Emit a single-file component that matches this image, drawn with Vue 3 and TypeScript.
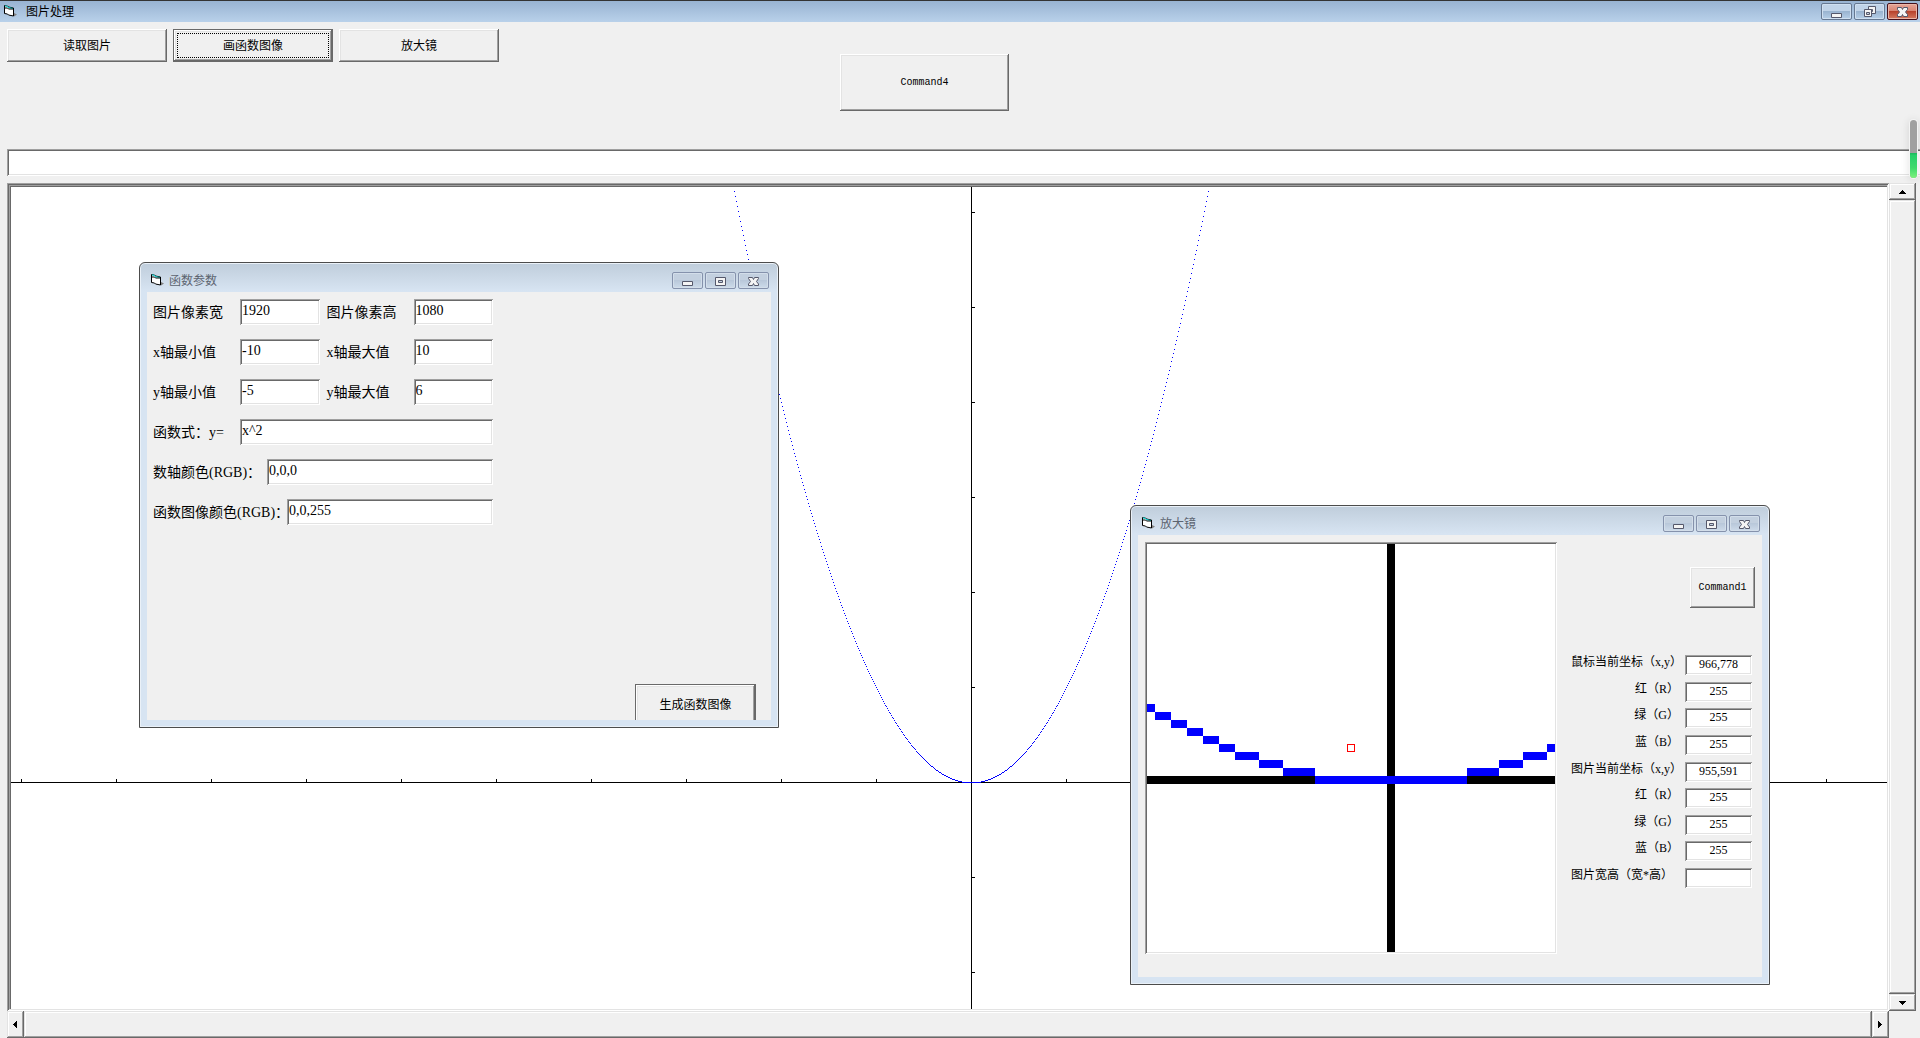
<script setup lang="ts">
import { ref } from 'vue'

type Glyph = 'min' | 'restore' | 'max' | 'close'

const UNIT = 95
const ORIGIN_X = 960
const ORIGIN_Y = 595
const REACH = 240
const CELL = 8
const GRID = 51

const level = (dx: number): number => Math.floor((dx * dx) / UNIT)

let curve = ''
for (let dx = -REACH; dx <= REACH; dx++) {
  curve += `M${ORIGIN_X + dx} ${ORIGIN_Y - level(dx)}h1v1h-1z`
}

let ticks = ''
for (let k = -10; k <= 10; k++) {
  ticks += `M${ORIGIN_X + k * UNIT} ${ORIGIN_Y - 3}h1v3h-1z`
  if (k >= -5 && k <= 6) ticks += `M${ORIGIN_X + 1} ${ORIGIN_Y - k * UNIT}h3v1h-3z`
}

const lensColumn = 30
const lensRow = 29
let lensCurve = ''
for (let c = 0; c < GRID; c++) {
  lensCurve += `M${c * CELL} ${(lensRow - level(c - lensColumn)) * CELL}h${CELL}v${CELL}h-${CELL}z`
}

const form = ref({
  width: '1920',
  height: '1080',
  xMin: '-10',
  xMax: '10',
  yMin: '-5',
  yMax: '6',
  expr: 'x^2',
  axis: '0,0,0',
  line: '0,0,255',
})

const path = ref('')

const readings = ref([
  { id: 'mouse', label: '鼠标当前坐标（x,y）', value: '966,778', short: false },
  { id: 'mr', label: '红（R）', value: '255', short: true },
  { id: 'mg', label: '绿（G）', value: '255', short: true },
  { id: 'mb', label: '蓝（B）', value: '255', short: true },
  { id: 'pic', label: '图片当前坐标（x,y）', value: '955,591', short: false },
  { id: 'pr', label: '红（R）', value: '255', short: true },
  { id: 'pg', label: '绿（G）', value: '255', short: true },
  { id: 'pb', label: '蓝（B）', value: '255', short: true },
  { id: 'size', label: '图片宽高（宽*高）', value: '', short: false },
])

const mainButtons: Glyph[] = ['min', 'restore', 'close']
const childButtons: Glyph[] = ['min', 'max', 'close']
const names: Record<Glyph, string> = { min: '最小化', restore: '还原', max: '最大化', close: '关闭' }
</script>

<template>
  <main class="app">
    <header class="titlebar">
      <svg class="form-icon" viewBox="0 0 14 12" width="14" height="12" aria-hidden="true">
        <path d="M10 8l3 1.500l-3 2z" fill="#808080" />
        <path d="M.5.5l3 .5l1 1l5 1v8l-5-1l-1-1l-3-.5z" fill="#fff" stroke="#000" />
        <path d="M1 1h2l1 1.500l5 1" fill="none" stroke="#00d8d8" />
        <path d="M1 3h2.500l1 1h5" fill="none" stroke="#000" />
      </svg>
      <h1>图片处理</h1>
      <div class="caption">
        <button v-for="g in mainButtons" :key="g" type="button" :class="['cap', 'bright', g]" :aria-label="names[g]">
          <svg viewBox="0 0 13 13" width="13" height="13" aria-hidden="true">
            <path v-if="g === 'min'" d="M1.500 8.500h10v4h-10z" />
            <g v-else-if="g === 'restore'">
              <path d="M5.500 1.500h7v7h-7z" /><path d="M7.500 4.500h2v2h-2z" />
              <path d="M1.500 4.500h7v7h-7z" /><path class="hole" d="M3.500 7.500h3v2h-3z" />
            </g>
            <path v-else d="M1.500 2.500h4l1 2l1-2h4v2l-2 2.500l2 2.500v2h-4l-1-2l-1 2h-4v-2l2-2.500l-2-2.500z" />
          </svg>
        </button>
      </div>
    </header>

    <nav class="toolbar">
      <button type="button" class="cmd wide">读取图片</button>
      <button type="button" class="cmd wide focused">画函数图像</button>
      <button type="button" class="cmd wide">放大镜</button>
      <button type="button" class="cmd command4 latin">Command4</button>
    </nav>

    <input v-model="path" class="field path" type="text" aria-label="图片路径" />

    <section class="viewer">
      <div class="canvas">
        <div class="canvas-view">
          <svg class="plot" viewBox="0 0 1920 1080" width="1920" height="1080" shape-rendering="crispEdges" role="img" aria-label="函数图像">
            <path :d="`M0 ${ORIGIN_Y}h1920v1h-1920zM${ORIGIN_X} 0h1v1080h-1z`" />
            <path :d="ticks" />
            <path :d="curve" fill="#00f" />
          </svg>
        </div>
      </div>
      <div class="vbar">
        <button type="button" class="bar-btn" aria-label="向上"><svg viewBox="0 0 7 4" width="7" height="4"><path d="M3 0h1v1h1v1h1v1h1v1h-7v-1h1v-1h1v-1h1z" /></svg></button>
        <div class="thumb"></div>
        <button type="button" class="bar-btn" aria-label="向下"><svg viewBox="0 0 7 4" width="7" height="4"><path d="M0 0h7v1h-1v1h-1v1h-1v1h-1v-1h-1v-1h-1v-1h-1z" /></svg></button>
      </div>
      <div class="hbar">
        <button type="button" class="bar-btn" aria-label="向左"><svg viewBox="0 0 4 7" width="4" height="7"><path d="M4 0v7h-1v-1h-1v-1h-1v-1h-1v-1h1v-1h1v-1h1v-1z" /></svg></button>
        <div class="thumb"></div>
        <button type="button" class="bar-btn" aria-label="向右"><svg viewBox="0 0 4 7" width="4" height="7"><path d="M0 0v7h1v-1h1v-1h1v-1h1v-1h-1v-1h-1v-1h-1v-1z" /></svg></button>
      </div>
    </section>

    <section
      v-for="w in ['函数参数', '放大镜']"
      :key="w"
      :class="['window', w === '放大镜' ? 'lens-window' : 'param-window']"
      :aria-label="w"
    >
      <header class="window-title">
        <svg class="form-icon" viewBox="0 0 14 12" width="14" height="12" aria-hidden="true">
          <path d="M10 8l3 1.500l-3 2z" fill="#808080" />
          <path d="M.5.5l3 .5l1 1l5 1v8l-5-1l-1-1l-3-.5z" fill="#fff" stroke="#000" />
          <path d="M1 1h2l1 1.500l5 1" fill="none" stroke="#00d8d8" />
          <path d="M1 3h2.500l1 1h5" fill="none" stroke="#000" />
        </svg>
        <h2>{{ w }}</h2>
        <div class="caption">
          <button v-for="g in childButtons" :key="g" type="button" class="cap" :aria-label="names[g]">
            <svg viewBox="0 0 13 13" width="13" height="13" aria-hidden="true">
              <path v-if="g === 'min'" d="M1.500 7.500h10v4h-10z" />
              <g v-else-if="g === 'max'">
                <path d="M1.500 3.500h10v8h-10z" /><path class="hole" d="M4.500 6.500h4v2h-4z" />
              </g>
              <path v-else d="M1.500 3.500h4l1 2l1-2h4v1l-2 3l2 2.500v1.500h-4l-1-2l-1 2h-4v-1.500l2-2.500l-2-3z" />
            </svg>
          </button>
        </div>
      </header>

      <form v-if="w === '函数参数'" class="params" @submit.prevent>
        <div class="row">
          <label for="pw">图片像素宽</label><input id="pw" v-model="form.width" class="field" type="text" />
          <label for="ph" class="second">图片像素高</label><input id="ph" v-model="form.height" class="field" type="text" />
        </div>
        <div class="row">
          <label for="x0">x轴最小值</label><input id="x0" v-model="form.xMin" class="field" type="text" />
          <label for="x1" class="second">x轴最大值</label><input id="x1" v-model="form.xMax" class="field" type="text" />
        </div>
        <div class="row">
          <label for="y0">y轴最小值</label><input id="y0" v-model="form.yMin" class="field" type="text" />
          <label for="y1" class="second">y轴最大值</label><input id="y1" v-model="form.yMax" class="field" type="text" />
        </div>
        <div class="row">
          <label for="fx">函数式：y=</label><input id="fx" v-model="form.expr" class="field grow" type="text" />
        </div>
        <div class="row">
          <label for="ac" class="mid">数轴颜色(RGB)：</label><input id="ac" v-model="form.axis" class="field grow" type="text" />
        </div>
        <div class="row">
          <label for="fc" class="long">函数图像颜色(RGB)：</label><input id="fc" v-model="form.line" class="field grow" type="text" />
        </div>
        <button type="submit" class="cmd generate">生成函数图像</button>
      </form>

      <div v-else class="lens">
        <div class="lens-view">
          <svg viewBox="0 0 408 408" width="408" height="408" shape-rendering="crispEdges" role="img" aria-label="放大图像">
            <path :d="`M${lensColumn * CELL} 0h${CELL}v408h-${CELL}zM0 ${lensRow * CELL}h408v${CELL}h-408z`" />
            <path :d="lensCurve" fill="#00f" />
            <path d="M200.500 200.500h7v7h-7z" fill="none" stroke="#f00" />
          </svg>
        </div>
        <div class="lens-side">
          <button type="button" class="cmd command1 latin">Command1</button>
          <div class="readings">
            <div v-for="r in readings" :key="r.id" class="reading">
              <label :for="r.id" :class="{ short: r.short }">{{ r.label }}</label>
              <input :id="r.id" v-model="r.value" class="field" type="text" />
            </div>
          </div>
        </div>
      </div>
    </section>

    <div class="meter" aria-hidden="true"><div class="meter-fill"></div></div>
  </main>
</template>

<style>
body {
  margin: 0;
}
</style>

<style scoped>
* {
  box-sizing: border-box;
}
.app {
  position: relative;
  display: flex;
  flex-direction: column;
  height: 100vh;
  overflow: hidden;
  background: #f0f0f0;
  color: #000;
  font-family: 'Liberation Serif', 'Noto Sans CJK SC', serif;
  font-size: 12px;
  line-height: 16px;
}
button,
input {
  margin: 0;
  border: 0;
  border-radius: 0;
  outline: 0;
  font: inherit;
  color: inherit;
}
h1,
h2 {
  flex: 1;
  margin: 0;
  font-family: 'Noto Sans CJK SC', sans-serif;
  font-size: 12px;
  line-height: 16px;
  font-weight: 400;
}
.titlebar {
  flex: none;
  display: flex;
  align-items: center;
  gap: 8px;
  height: 22px;
  padding: 0 2px 1px 4px;
  border-top: 1px solid #333;
  background: linear-gradient(#98b3d2, #b9d1ea);
}
.form-icon {
  flex: none;
}
.caption {
  display: flex;
  gap: 2px;
}
.cap {
  display: grid;
  place-items: center;
  width: 31px;
  height: 17px;
  padding: 0;
  border: 1px solid #8592ac;
  border-radius: 2px;
  background: linear-gradient(#c3d0df 50%, #b9c8da 50%, #cddbea);
  box-shadow: inset 0 0 0 1px #d3deea;
}
.cap svg {
  fill: #f4f4f4;
  stroke: #55586b;
}
.cap .hole {
  fill: #c3d0df;
}
.cap.bright {
  border-color: #667891;
  background: linear-gradient(#c0d3e8 45%, #9ab4d0 50%, #b6cfe8);
  box-shadow: inset 0 0 0 1px #cfdff0;
}
.cap.bright.close {
  border-color: #45101b;
  background: linear-gradient(#e6a598, #d98573 45%, #b8432d 50%, #d57a60);
  box-shadow: inset 0 0 0 1px #eab6a8;
}
.cmd {
  padding: 0;
  background: #f0f0f0;
  box-shadow: inset -1px -1px #696969, inset 1px 1px #fff, inset -2px -2px #a0a0a0, inset 2px 2px #e3e3e3;
  text-align: center;
}
.latin {
  font-family: 'Liberation Mono', monospace;
  font-size: 10px;
}
.toolbar {
  flex: none;
  display: flex;
  align-items: flex-start;
  gap: 6px;
  height: 127px;
  padding: 7px;
}
.wide {
  width: 160px;
  height: 33px;
}
.focused {
  position: relative;
  border: 1px solid #696969;
}
.focused::after {
  content: '';
  position: absolute;
  inset: 3px;
  border: 1px dotted #000;
}
.command4 {
  width: 169px;
  height: 57px;
  margin: 25px 0 0 335px;
}
.field {
  min-width: 0;
  padding: 2px;
  background: #fff;
  box-shadow: inset 1px 1px #a0a0a0, inset -1px -1px #fff, inset 2px 2px #696969, inset -2px -2px #e3e3e3;
}
.path {
  flex: none;
  height: 27px;
  margin: 0 -2px 7px 7px;
}
.viewer {
  flex: 1;
  min-height: 0;
  display: grid;
  grid-template-columns: minmax(0, 1fr) 27px;
  grid-template-rows: minmax(0, 1fr) 27px;
  padding: 0 4px 0 7px;
}
.canvas {
  display: flex;
  min-height: 0;
  padding: 4px 2px 2px 4px;
  background: #fff;
  box-shadow: inset 1px 1px #a0a0a0, inset -1px -1px #fff, inset 2px 2px #696969, inset -2px -2px #e3e3e3,
    inset 3px 3px #a0a0a0, inset 4px 4px #696969;
}
.canvas-view {
  flex: 1;
  min-width: 0;
  overflow: hidden;
}
.plot {
  display: block;
}
.vbar {
  display: flex;
  flex-direction: column;
}
.hbar {
  display: flex;
}
.bar-btn,
.thumb {
  padding: 0;
  background: #f0f0f0;
  box-shadow: inset -1px -1px #696969, inset 1px 1px #e3e3e3, inset -2px -2px #a0a0a0, inset 2px 2px #fff;
}
.bar-btn {
  flex: 0 0 17px;
  display: grid;
  place-items: center;
}
.hbar .bar-btn {
  padding-right: 2px;
}
.thumb {
  flex: 1;
}
.window {
  position: absolute;
  display: flex;
  flex-direction: column;
  width: 640px;
  padding: 0 7px 7px;
  border: 1px solid #4c4c4c;
  border-radius: 6px 6px 0 0;
  background: linear-gradient(#bfcddb, #d7e4f2 28px);
  box-shadow: inset 0 0 0 1px #eaf1f8;
  overflow: hidden;
}
.param-window {
  left: 139px;
  top: 262px;
  height: 466px;
}
.lens-window {
  left: 1130px;
  top: 505px;
  height: 480px;
}
.window-title {
  flex: none;
  display: flex;
  align-items: center;
  gap: 4px;
  height: 29px;
  padding: 6px 2px 2px 4px;
  color: #5c6470;
}
.window-title .caption {
  margin-top: 2px;
}
.params,
.lens {
  flex: 1;
  min-height: 0;
  overflow: hidden;
  background: #f0f0f0;
}
.params {
  display: flex;
  flex-direction: column;
  gap: 14px;
  padding: 7px 15px 0 6px;
  font-size: 14px;
}
.row {
  flex: none;
  display: flex;
  width: 340px;
  height: 26px;
}
.row label {
  flex: 0 0 87px;
  min-width: 0;
  line-height: 28px;
  white-space: nowrap;
}
.row .second {
  flex-basis: 94px;
  padding-left: 7px;
}
.row .mid {
  flex-basis: 114px;
}
.row .long {
  flex-basis: 134px;
}
.row .field {
  width: 80px;
  padding-bottom: 4px;
}
.row .grow {
  flex: 1;
}
.generate {
  flex: none;
  align-self: flex-end;
  width: 121px;
  height: 42px;
  margin-top: 145px;
  border: 1px solid #696969;
  font-size: 12px;
}
.lens {
  display: flex;
  justify-content: space-between;
  padding: 7px;
}
.lens-view {
  width: 412px;
  height: 412px;
  padding: 2px;
  background: #fff;
  box-shadow: inset 1px 1px #a0a0a0, inset -1px -1px #fff, inset 2px 2px #696969, inset -2px -2px #e3e3e3;
}
.lens-view svg {
  display: block;
}
.lens-side {
  display: flex;
  flex-direction: column;
  width: 184px;
}
.command1 {
  align-self: flex-end;
  width: 65px;
  height: 41px;
  margin-top: 25px;
}
.readings {
  display: flex;
  flex-direction: column;
  justify-content: space-between;
  height: 233px;
  margin-top: 47px;
}
.reading {
  display: flex;
  height: 20px;
}
.reading label {
  width: 114px;
  line-height: 14px;
  white-space: nowrap;
}
.reading .short {
  padding-right: 6px;
  text-align: right;
}
.reading .field {
  width: 67px;
  padding: 1px 2px 3px;
  text-align: center;
}
.meter {
  position: absolute;
  right: 3px;
  top: 120px;
  display: flex;
  flex-direction: column;
  justify-content: flex-end;
  width: 7px;
  height: 58px;
  border-radius: 4px;
  background: #a0a0a0;
  box-shadow: 0 0 0 1px #f4f4f4, 0 1px 8px 1px rgba(0, 0, 0, 0.12);
  overflow: hidden;
}
.meter-fill {
  height: 25px;
  background: linear-gradient(#1cb85c, #27cf6a 10%, #3fda6c 60%, #7cf27c);
}
</style>
